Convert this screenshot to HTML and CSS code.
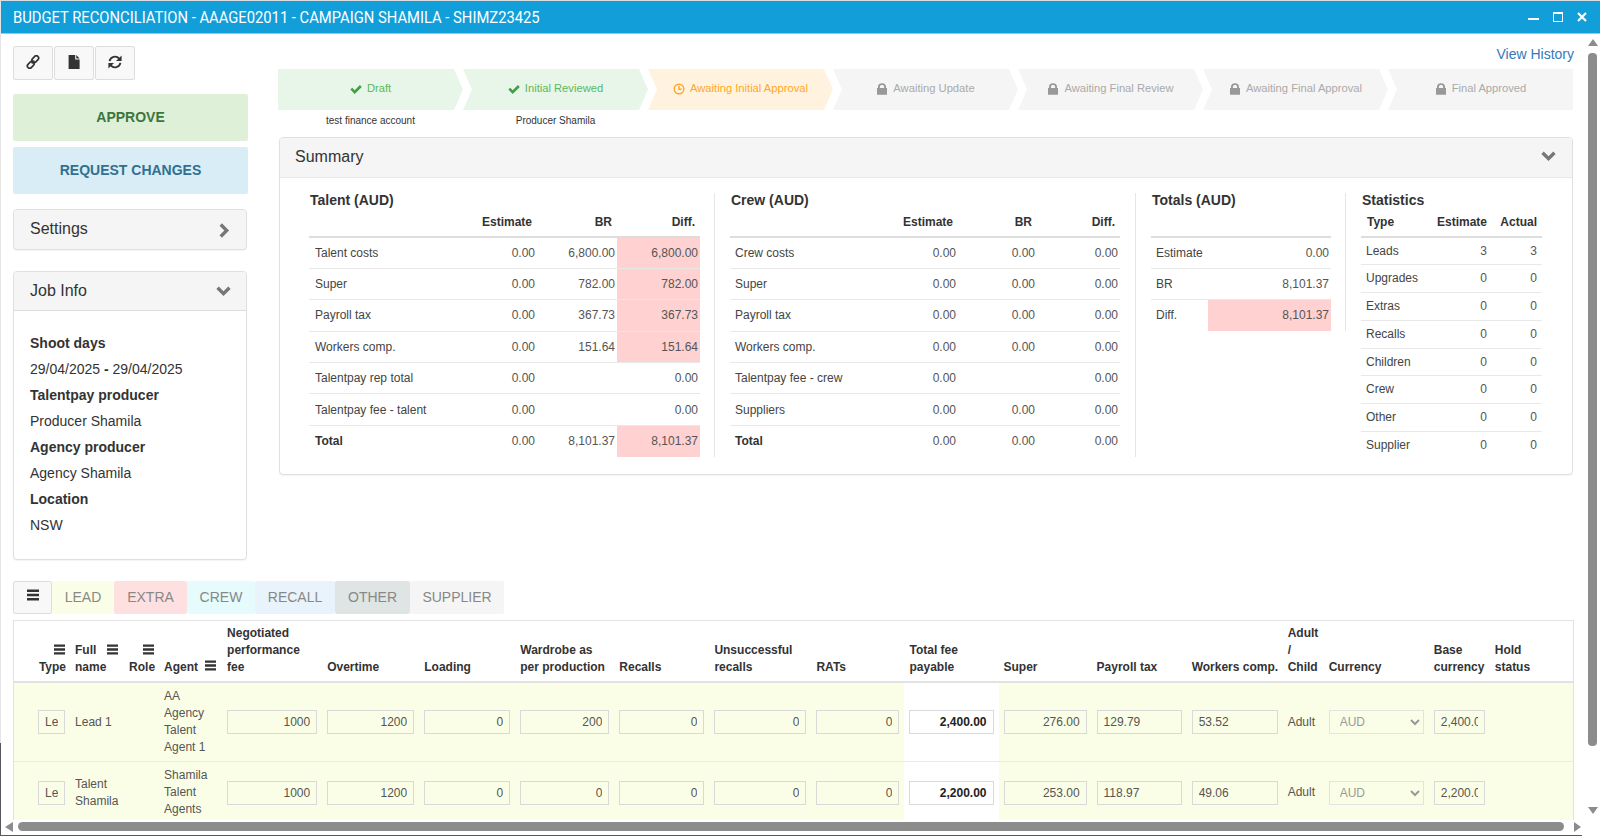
FILE: index.html
```html
<!DOCTYPE html>
<html lang="en">
<head>
<meta charset="utf-8">
<title>Budget Reconciliation</title>
<link rel="stylesheet" href="styles.css">
</head>
<body>
<svg class="sprite" width="0" height="0" aria-hidden="true">
  <symbol id="i-menu" viewBox="0 0 12 12"><path d="M0 .5h12v2.6H0zM0 4.7h12v2.6H0zM0 8.9h12v2.6H0z"/></symbol>
  <symbol id="i-lock" viewBox="0 0 12 12"><path d="M2 5V3.6C2 1.5 3.7.3 6 .3s4 1.2 4 3.3V5h1v6.7H1V5zm1.9 0h4.2V3.7C8.1 2.5 7.2 2 6 2s-2.1.5-2.1 1.7z"/></symbol>
  <symbol id="i-check" viewBox="0 0 12 12"><path d="M.3 6.6 2.2 4.7l2.5 2.5L9.9 2l1.9 1.9-7.1 7z"/></symbol>
  <symbol id="i-chev-d" viewBox="0 0 16 12"><path d="M2.8.6 8 5.8 13.2.6l2.6 2.6L8 11 .2 3.2z"/></symbol>
  <symbol id="i-chev-r" viewBox="0 0 12 16"><path d="M.6 2.8 3.2.2 11 8l-7.8 7.8L.6 13.2 5.8 8z"/></symbol>
</svg>
<div class="window">
  <header class="titlebar">
    <span class="title">BUDGET RECONCILIATION - AAAGE02011 - CAMPAIGN SHAMILA - SHIMZ23425</span>
    <div class="winctl">
      <span class="win-min"></span>
      <span class="win-max"></span>
      <svg class="win-close" viewBox="0 0 10 10"><path d="M1 1l8 8M9 1l-8 8"/></svg>
    </div>
  </header>
  <div class="viewport">
    <main class="content">
      <div class="top">
        <aside class="side">
          <div class="toolbar">
            <button class="tool"><svg viewBox="0 0 14 14" class="tool-ico"><g fill="none" stroke="#333" stroke-width="1.7"><rect x="7" y=".4" width="4.6" height="7.4" rx="2.2" transform="rotate(45 9.3 4.1)"/><rect x="2.4" y="6.2" width="4.6" height="7.4" rx="2.2" transform="rotate(45 4.7 9.9)"/><path d="M5.6 8.4 8.4 5.6"/></g></svg></button>
            <button class="tool"><svg viewBox="0 0 14 14" class="tool-ico"><path fill="#333" d="M1.6 0h6.6v4.6h4.4V14h-11zM9.3 0l3.3 3.4H9.3z"/></svg></button>
            <button class="tool"><svg viewBox="0 0 14 14" class="tool-ico"><g fill="none" stroke="#333" stroke-width="1.9"><path d="M1.6 6.2A5.5 5.5 0 0 1 11.2 3.6"/><path d="M12.4 7.8A5.5 5.5 0 0 1 2.8 10.4"/></g><path fill="#333" d="M13.6.4v5.6H8zM.4 13.6V8H6z"/></svg></button>
          </div>
          <button class="action approve">APPROVE</button>
          <button class="action request">REQUEST CHANGES</button>
          <section class="panel settings">
            <div class="panel-head side-head"><span>Settings</span><svg class="chev-r"><use href="#i-chev-r"/></svg></div>
          </section>
          <section class="panel jobinfo">
            <div class="panel-head side-head job-head"><span>Job Info</span><svg class="chev-d"><use href="#i-chev-d"/></svg></div>
            <div class="job-body">
              <div class="job-b">Shoot days</div>
              <div>29/04/2025 <b>-</b> 29/04/2025</div>
              <div class="job-b">Talentpay producer</div>
              <div>Producer Shamila</div>
              <div class="job-b">Agency producer</div>
              <div>Agency Shamila</div>
              <div class="job-b">Location</div>
              <div>NSW</div>
            </div>
          </section>
        </aside>
        <div class="right">
          <div class="history-row"><a class="history">View History</a></div>
          <ol class="stepper">
            <li class="step done first"><svg class="step-ico"><use href="#i-check"/></svg>Draft</li>
            <li class="step done"><svg class="step-ico"><use href="#i-check"/></svg>Initial Reviewed</li>
            <li class="step current"><svg class="step-ico" viewBox="0 0 12 12"><g fill="none" stroke="currentColor" stroke-width="1.4"><circle cx="6" cy="6" r="4.8"/><path d="M6 3v3.3h2.6"/></g></svg>Awaiting Initial Approval</li>
            <li class="step locked"><svg class="step-ico"><use href="#i-lock"/></svg>Awaiting Update</li>
            <li class="step locked"><svg class="step-ico"><use href="#i-lock"/></svg>Awaiting Final Review</li>
            <li class="step locked"><svg class="step-ico"><use href="#i-lock"/></svg>Awaiting Final Approval</li>
            <li class="step locked last"><svg class="step-ico"><use href="#i-lock"/></svg>Final Approved</li>
          </ol>
          <div class="step-names">
            <span>test finance account</span>
            <span>Producer Shamila</span>
          </div>
          <section class="panel summary">
            <div class="panel-head sum-head"><span>Summary</span><svg class="chev-d"><use href="#i-chev-d"/></svg></div>
            <div class="sum-body">
              <div class="sum-col col-talent">
                <h4>Talent (AUD)</h4>
                <table class="sum sum-3 t-talent">
                  <thead><tr><th></th><th>Estimate</th><th>BR</th><th>Diff.</th></tr></thead>
                  <tbody>
                    <tr><td>Talent costs</td><td>0.00</td><td>6,800.00</td><td class="neg">6,800.00</td></tr>
                    <tr><td>Super</td><td>0.00</td><td>782.00</td><td class="neg">782.00</td></tr>
                    <tr><td>Payroll tax</td><td>0.00</td><td>367.73</td><td class="neg">367.73</td></tr>
                    <tr><td>Workers comp.</td><td>0.00</td><td>151.64</td><td class="neg">151.64</td></tr>
                    <tr><td>Talentpay rep total</td><td>0.00</td><td></td><td>0.00</td></tr>
                    <tr><td>Talentpay fee - talent</td><td>0.00</td><td></td><td>0.00</td></tr>
                    <tr><td><b>Total</b></td><td>0.00</td><td>8,101.37</td><td class="neg">8,101.37</td></tr>
                  </tbody>
                </table>
              </div>
              <div class="sum-col col-crew">
                <h4>Crew (AUD)</h4>
                <table class="sum sum-3 t-crew">
                  <thead><tr><th></th><th>Estimate</th><th>BR</th><th>Diff.</th></tr></thead>
                  <tbody>
                    <tr><td>Crew costs</td><td>0.00</td><td>0.00</td><td>0.00</td></tr>
                    <tr><td>Super</td><td>0.00</td><td>0.00</td><td>0.00</td></tr>
                    <tr><td>Payroll tax</td><td>0.00</td><td>0.00</td><td>0.00</td></tr>
                    <tr><td>Workers comp.</td><td>0.00</td><td>0.00</td><td>0.00</td></tr>
                    <tr><td>Talentpay fee - crew</td><td>0.00</td><td></td><td>0.00</td></tr>
                    <tr><td>Suppliers</td><td>0.00</td><td>0.00</td><td>0.00</td></tr>
                    <tr><td><b>Total</b></td><td>0.00</td><td>0.00</td><td>0.00</td></tr>
                  </tbody>
                </table>
              </div>
              <div class="sum-col col-totals">
                <h4>Totals (AUD)</h4>
                <table class="sum t-totals">
                  <thead><tr><th></th><th></th></tr></thead>
                  <tbody>
                    <tr><td>Estimate</td><td>0.00</td></tr>
                    <tr><td>BR</td><td>8,101.37</td></tr>
                    <tr><td>Diff.</td><td class="neg">8,101.37</td></tr>
                  </tbody>
                </table>
              </div>
              <div class="sum-col col-stats">
                <h4>Statistics</h4>
                <table class="sum t-stats">
                  <thead><tr><th>Type</th><th>Estimate</th><th>Actual</th></tr></thead>
                  <tbody>
                    <tr><td>Leads</td><td>3</td><td>3</td></tr>
                    <tr><td>Upgrades</td><td>0</td><td>0</td></tr>
                    <tr><td>Extras</td><td>0</td><td>0</td></tr>
                    <tr><td>Recalls</td><td>0</td><td>0</td></tr>
                    <tr><td>Children</td><td>0</td><td>0</td></tr>
                    <tr><td>Crew</td><td>0</td><td>0</td></tr>
                    <tr><td>Other</td><td>0</td><td>0</td></tr>
                    <tr><td>Supplier</td><td>0</td><td>0</td></tr>
                  </tbody>
                </table>
              </div>
            </div>
          </section>
        </div>
      </div>
      <nav class="tabs">
        <button class="tab tab-menu"><svg class="menu-ico"><use href="#i-menu"/></svg></button>
        <button class="tab tab-lead">LEAD</button>
        <button class="tab tab-extra">EXTRA</button>
        <button class="tab tab-crew">CREW</button>
        <button class="tab tab-recall">RECALL</button>
        <button class="tab tab-other">OTHER</button>
        <button class="tab tab-supplier">SUPPLIER</button>
      </nav>
      <div class="grid-wrap">
        <table class="grid">
          <colgroup>
            <col class="w56"><col class="w54"><col class="w35"><col class="w63"><col class="w100"><col class="w97"><col class="w96"><col class="w99"><col class="w95"><col class="w102"><col class="w93"><col class="w94"><col class="w93"><col class="w95"><col class="w96"><col class="w41"><col class="w105"><col class="w61"><col class="w83">
          </colgroup>
          <thead>
            <tr>
              <th class="ar"><svg class="th-ico"><use href="#i-menu"/></svg><br>Type</th>
              <th>Full <svg class="th-ico name-ico"><use href="#i-menu"/></svg><br>name</th>
              <th class="ar"><svg class="th-ico"><use href="#i-menu"/></svg><br>Role</th>
              <th class="nowrap">Agent <svg class="th-ico agent-ico"><use href="#i-menu"/></svg></th>
              <th>Negotiated performance fee</th>
              <th>Overtime</th>
              <th>Loading</th>
              <th>Wardrobe as per production</th>
              <th>Recalls</th>
              <th>Unsuccessful recalls</th>
              <th>RATs</th>
              <th>Total fee payable</th>
              <th>Super</th>
              <th>Payroll tax</th>
              <th class="nowrap">Workers comp.</th>
              <th>Adult / Child</th>
              <th>Currency</th>
              <th>Base currency</th>
              <th>Hold<br>status</th>
            </tr>
          </thead>
          <tbody>
            <tr>
              <td class="ar"><input class="in in-type" value="Le" readonly></td>
              <td>Lead 1</td>
              <td></td>
              <td>AA Agency Talent Agent 1</td>
              <td><input class="in" value="1000" readonly></td>
              <td><input class="in" value="1200" readonly></td>
              <td><input class="in" value="0" readonly></td>
              <td><input class="in" value="200" readonly></td>
              <td><input class="in" value="0" readonly></td>
              <td><input class="in" value="0" readonly></td>
              <td><input class="in" value="0" readonly></td>
              <td class="white"><input class="in total" value="2,400.00" readonly></td>
              <td><input class="in" value="276.00" readonly></td>
              <td><input class="in left" value="129.79" readonly></td>
              <td><input class="in left" value="53.52" readonly></td>
              <td>Adult</td>
              <td><select class="sel" disabled><option>AUD</option></select></td>
              <td><input class="in left" value="2,400.00" readonly></td>
              <td></td>
            </tr>
            <tr>
              <td class="ar"><input class="in in-type" value="Le" readonly></td>
              <td>Talent Shamila</td>
              <td></td>
              <td>Shamila Talent Agents</td>
              <td><input class="in" value="1000" readonly></td>
              <td><input class="in" value="1200" readonly></td>
              <td><input class="in" value="0" readonly></td>
              <td><input class="in" value="0" readonly></td>
              <td><input class="in" value="0" readonly></td>
              <td><input class="in" value="0" readonly></td>
              <td><input class="in" value="0" readonly></td>
              <td class="white"><input class="in total" value="2,200.00" readonly></td>
              <td><input class="in" value="253.00" readonly></td>
              <td><input class="in left" value="118.97" readonly></td>
              <td><input class="in left" value="49.06" readonly></td>
              <td>Adult</td>
              <td><select class="sel" disabled><option>AUD</option></select></td>
              <td><input class="in left" value="2,200.00" readonly></td>
              <td></td>
            </tr>
          </tbody>
        </table>
      </div>
    </main>
    <div class="vscroll"><i class="arr-up"></i><i class="v-thumb"></i><i class="arr-down"></i></div>
    <div class="hscroll"><i class="arr-left"></i><i class="h-thumb"></i><i class="arr-right"></i></div>
  </div>
</div>
</body>
</html>
```
FILE: styles.css
```css
* { box-sizing: border-box; }
html, body { margin: 0; padding: 0; height: 100%; overflow: hidden; background: #fff; }
body { font: 14px/20px "Liberation Sans", Arial, sans-serif; color: #333; }
.sprite { position: absolute; }
button { font-family: inherit; cursor: pointer; }

.window { position: relative; height: 836px; display: flex; flex-direction: column; border-top: 1px solid #d9dde0; border-left: 1px solid #e4e4e4; }
.window::after { content: ""; position: absolute; left: -1px; top: 742px; bottom: 0; width: 1px; background: #55585c; }

.titlebar { flex: none; height: 33px; background: #129ed9; border-bottom: 1px solid #8fcde9; color: #fff; display: flex; align-items: center; justify-content: space-between; padding: 0 13px 0 12px; }
.title { font: 400 16px/32px Roboto, sans-serif; padding-top: 1px; white-space: nowrap; transform: scaleX(.923); transform-origin: left center; }
.winctl { display: flex; align-items: center; gap: 14px; }
.win-min { width: 11px; height: 2px; background: #fff; margin-top: 3px; }
.win-max { width: 10px; height: 10px; border: 1px solid #fff; border-top-width: 2.5px; }
.win-close { width: 10px; height: 10px; fill: none; stroke: #fff; stroke-width: 2.2; }

.viewport { flex: 1; min-height: 0; display: grid; grid-template-columns: 1fr 18px; grid-template-rows: 786px 1fr; }
.content { min-width: 0; overflow: hidden; padding-left: 12px; padding-right: 7px; display: flex; flex-direction: column; }

.top { display: flex; gap: 30px; flex: none; }
.side { flex: none; width: 235px; padding-top: 12px; }
.right { flex: 1; min-width: 0; }

.toolbar { display: flex; gap: 1px; margin-bottom: 14px; }
.tool { width: 40px; height: 34px; padding: 0; background: #f8f8f8; border: 1px solid #ddd; border-radius: 2px; display: flex; align-items: center; justify-content: center; }
.tool-ico { width: 14px; height: 14px; margin-top: -2px; }

.action { display: block; width: 100%; height: 47px; padding: 0 0 2px; border: 0; border-radius: 2px; font-weight: 700; font-size: 14px; }
.approve { background: #dff0d8; color: #3c763d; margin-bottom: 6px; }
.request { background: #d9edf7; color: #31708f; margin-bottom: 15px; }

.panel { background: #fff; border: 1px solid #e0e0e0; border-radius: 4px; box-shadow: 0 1px 1px rgba(0,0,0,.05); }
.panel-head { background: #f5f5f5; color: #333; font-size: 16px; display: flex; align-items: center; justify-content: space-between; }
.side-head { padding: 0 15px 0 16px; }
.settings { width: 234px; height: 41px; margin-bottom: 21px; overflow: hidden; background: #f5f5f5; }
.settings .panel-head { height: 37px; }
.jobinfo { width: 234px; height: 289px; }
.job-head { height: 39px; border-bottom: 1px solid #ddd; border-radius: 3px 3px 0 0; }
.chev-r { width: 11px; height: 15px; fill: #777; margin-right: 1px; margin-top: 4px; }
.chev-d { width: 15px; height: 11px; fill: #777; }
.job-body { padding: 19px 16px 21px; line-height: 26px; }
.job-b { font-weight: 700; }

.history-row { height: 35px; padding: 10px 1px 0 0; text-align: right; }
.history { color: #337ab7; font-size: 14px; }

.stepper { list-style: none; margin: 0; padding: 0; display: grid; grid-template-columns: repeat(7, 185px); }
.step { height: 41px; padding-bottom: 2px; font-size: 11.2px; line-height: 39px; display: flex; align-items: center; justify-content: center; gap: 5px; clip-path: polygon(0 0, calc(100% - 9px) 0, 100% 50%, calc(100% - 9px) 100%, 0 100%, 9px 50%); }
.step.first { clip-path: polygon(0 0, calc(100% - 9px) 0, 100% 50%, calc(100% - 9px) 100%, 0 100%); }
.step.last { clip-path: polygon(0 0, 100% 0, 100% 100%, 0 100%, 9px 50%); }
.step-ico { width: 12px; height: 12px; fill: currentColor; flex: none; }
.done { background: #e8f5e9; color: #5cb85c; }
.done .step-ico { fill: #43a047; }
.current { background: #fff3e0; color: #ffa726; }
.locked { background: #f5f5f5; color: #aaa; }
.locked .step-ico { fill: #999; }

.step-names { display: grid; grid-template-columns: repeat(7, 185px); height: 27px; padding-top: 3px; font-size: 10px; line-height: 16px; text-align: center; }

.summary { width: 1294px; margin-left: 1px; height: 338px; }
.sum-head { height: 40px; padding: 0 16px 2px 15px; border-bottom: 1px solid #e8e8e8; border-radius: 3px 3px 0 0; }
.sum-body { display: flex; align-items: flex-start; padding: 15px 0 0 29px; }
.sum-body h4 { margin: 0; font-size: 14px; line-height: 15px; font-weight: 700; }
.sum-col { flex: none; }
.col-talent { width: 406px; padding-right: 14px; border-right: 1px solid #e5e5e5; }
.col-talent h4 { padding-left: 1px; }
.col-crew { width: 421px; padding: 0 15px 0 15px; border-right: 1px solid #e5e5e5; }
.col-crew h4 { padding-left: 1px; }
.col-totals { width: 210px; padding: 0 14px 0 15px; border-right: 1px solid #e5e5e5; }
.col-totals h4 { padding-left: 1px; }
.col-stats { width: 196px; padding-left: 15px; }
.col-stats h4 { padding-left: 1px; }

.sum { width: 100%; border-collapse: collapse; table-layout: fixed; font-size: 12px; }
.sum th { height: 29px; padding: 0 5px 0 0; font-weight: 700; text-align: right; border-bottom: 2px solid #ddd; }
.sum td { height: 31.4px; padding: 0 2px 0 0; text-align: right; color: #555; border-bottom: 1px solid #e8e8e8; }
.sum td:first-child { text-align: left; padding-left: 6px; color: #444; }
.t-crew td:first-child, .t-totals td:first-child, .t-stats td:first-child { padding-left: 5px; }
.sum tr:last-child td { border-bottom: 0; }
.sum b { color: #333; }
.sum .neg { background: #ffd1d1; }
.sum-3 th:nth-child(2) { width: 57px; }
.t-talent th:first-child { width: 171px; }
.t-talent th:nth-child(3) { width: 80px; }
.t-crew th:first-child { width: 171px; }
.t-crew th:nth-child(2) { width: 57px; }
.t-crew th:nth-child(3) { width: 79px; }
.t-totals th:first-child { width: 57px; }
.t-totals tr:last-child td { padding-bottom: 2px; }
.t-stats th:first-child { width: 70px; text-align: left; padding-left: 6px; }
.t-stats th:last-child { width: 50px; }
.t-stats td { height: 27.8px; padding-right: 5px; padding-bottom: 1px; }

.tabs { flex: none; display: flex; margin-top: 21px; height: 33px; }
.tab { height: 33px; padding: 0 0 2px; border: 1px solid transparent; font-size: 14px; color: #888; background: #fff; border-radius: 2px; }
.tab-menu { width: 39px; background: #f8f8f8; border-color: #ddd; }
.menu-ico { width: 12px; height: 12px; fill: #333; display: block; margin: -3px auto 0; }
.tab-lead { width: 62px; background: #fbfee6; }
.tab-extra { width: 73px; background: #ffe0e0; }
.tab-crew { width: 68px; background: #e6fbfc; }
.tab-recall { width: 80px; background: #e9f3fb; }
.tab-other { width: 75px; background: #dfe4e4; }
.tab-supplier { width: 94px; background: #f5f5f5; }

.grid-wrap { flex: 1; min-height: 0; margin-top: 6px; border: 1px solid #e2e2e2; border-bottom: 0; overflow: hidden; width: 1561px; }
.grid { width: 1559px; table-layout: fixed; border-collapse: collapse; font-size: 12px; line-height: 17px; }
.w56 { width: 56px; } .w54 { width: 54px; } .w35 { width: 35px; } .w63 { width: 63px; } .w100 { width: 100px; }
.w97 { width: 97px; } .w96 { width: 96px; } .w99 { width: 99px; } .w95 { width: 95px; } .w102 { width: 102px; }
.w93 { width: 93px; } .w94 { width: 94px; } .w41 { width: 41px; } .w105 { width: 105px; } .w61 { width: 61px; } .w83 { width: 83px; }
.grid th { padding: 4px 5px 5px; font-weight: 700; text-align: left; vertical-align: bottom; border-bottom: 2px solid #e2e2e2; overflow: visible; }
.grid th.ar { text-align: right; padding-right: 4px; }
.grid th.ar .th-ico { margin-right: 1px; }
.grid th.nowrap { white-space: nowrap; }
.grid td { padding: 5px; background: #fbfee6; border-bottom: 1px solid #eaeaea; color: #555; vertical-align: middle; }
.grid td.ar { text-align: right; }
.grid td.white { background: #fff; }
.th-ico { width: 11px; height: 11px; fill: #333; vertical-align: -1px; }
.name-ico { margin-left: 7px; }
.agent-ico { margin-left: 4px; vertical-align: 0; }
.in { display: block; width: 100%; height: 24px; padding: 0 6px; border: 1px solid #d9d9d9; background: transparent; color: #555; font: 12px "Liberation Sans", Arial, sans-serif; text-align: right; outline: 0; }
.in.left { text-align: left; }
.in.in-type { width: 27px; margin-left: auto; text-align: left; }
.in.total { background: #fff; color: #222; font-weight: 700; }
.sel { display: block; width: 100%; height: 24px; padding: 0 0 0 6px; border: 1px solid #e3e3e3; background-color: transparent; color: #999; font: 12px "Liberation Sans", Arial, sans-serif; opacity: 1; }

.vscroll { grid-row: 1 / 3; grid-column: 2; display: flex; flex-direction: column; align-items: center; padding: 5px 0 0 3px; }
.v-thumb { width: 9px; height: 693px; margin-top: 7px; background: #8c8c8c; border-radius: 4px; }
.arr-up { width: 0; height: 0; border: 5px solid transparent; border-top: 0; border-bottom: 7px solid #8c8c8c; }
.arr-down { width: 0; height: 0; border: 5px solid transparent; border-bottom: 0; border-top: 7px solid #8c8c8c; margin-top: 61px; }
.hscroll { grid-row: 2; grid-column: 1; display: flex; align-items: flex-start; padding: 2px 0 0 4px; border-bottom: 1px solid #55585c; }
.arr-left { width: 0; height: 0; margin-top: 0; border: 5px solid transparent; border-left: 0; border-right: 8px solid #8c8c8c; }
.h-thumb { width: 1546px; height: 9px; margin-left: 5px; background: #8c8c8c; border-radius: 4.5px; }
.arr-right { width: 0; height: 0; margin-left: 10px; border: 5px solid transparent; border-right: 0; border-left: 7px solid #8c8c8c; }
```
